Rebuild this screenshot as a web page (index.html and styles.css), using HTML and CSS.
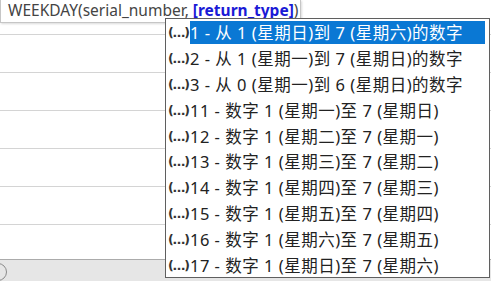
FILE: index.html
```html
<!DOCTYPE html>
<html>
<head>
<meta charset="UTF-8">
<title>WEEKDAY</title>
<link rel="stylesheet" href="styles.css">
</head>
<body>

    <div class="sheet">
        <div class="grid">
            <div class="row first"></div>
            <div class="row"></div>
            <div class="row"></div>
            <div class="row"></div>
            <div class="row"></div>
            <div class="row"></div>
        </div>
        <div class="tabbar">
            <span class="add-sheet"></span>
        </div>

        <!-- 함수 도움말 -->
        <div class="tip">WEEKDAY(serial_number, <b>[return_type]</b>)</div>

        <!-- 자동완성 목록 -->
        <ul class="list">
            <li class="on"><span class="ico">(…)</span><span class="txt">1 - 从 1 (星期日)到 7 (星期六)的数字</span></li>
            <li><span class="ico">(…)</span><span class="txt">2 - 从 1 (星期一)到 7 (星期日)的数字</span></li>
            <li><span class="ico">(…)</span><span class="txt">3 - 从 0 (星期一)到 6 (星期日)的数字</span></li>
            <li><span class="ico">(…)</span><span class="txt">11 - 数字 1 (星期一)至 7 (星期日)</span></li>
            <li><span class="ico">(…)</span><span class="txt">12 - 数字 1 (星期二)至 7 (星期一)</span></li>
            <li><span class="ico">(…)</span><span class="txt">13 - 数字 1 (星期三)至 7 (星期二)</span></li>
            <li><span class="ico">(…)</span><span class="txt">14 - 数字 1 (星期四)至 7 (星期三)</span></li>
            <li><span class="ico">(…)</span><span class="txt">15 - 数字 1 (星期五)至 7 (星期四)</span></li>
            <li><span class="ico">(…)</span><span class="txt">16 - 数字 1 (星期六)至 7 (星期五)</span></li>
            <li><span class="ico">(…)</span><span class="txt">17 - 数字 1 (星期日)至 7 (星期六)</span></li>
        </ul>
    </div>

</body>
</html>
```

FILE: styles.css
```css
*{
    box-sizing: border-box;
}

body{
    margin: 0;
    background-color: #fff;
    font-family: "Noto Sans", "Noto Sans CJK SC", sans-serif;
}

.sheet {
    position: relative;
    width: 491px;
    height: 281px;
    overflow: hidden;
    display: flex;
    flex-direction: column;
}

.grid {
    flex: 1;
}

.grid .row {
    height: 38px;
    border-bottom: 1px solid #d4d4d4;
}

.grid .row.first {
    height: 35px;
}

.tabbar {
    height: 22px;
    background-color: #e6e6e6;
    border-top: 1px solid #ababab;
}

.add-sheet {
    display: block;
    width: 18px;
    height: 18px;
    margin: 3px 0 0 -11px;
    border: 1px solid #8a8a8a;
    border-radius: 50%;
}

.tip {
    position: absolute;
    left: 0;
    top: 0;
    width: 301px;
    height: 23px;
    padding: 0 0 0 7px;
    background-color: #fff;
    border: 1px solid #c6c6c6;
    border-top: none;
    box-shadow: 1px 1px 2px rgba(0,0,0,0.15);
    color: #444;
    font-size: 15.5px;
    line-height: 21px;
    white-space: nowrap;
}

.tip b {
    color: #1a1ad6;
}

.list {
    position: absolute;
    left: 165px;
    top: 18px;
    width: 325px;
    height: 260px;
    margin: 0;
    padding: 1px 0;
    list-style-type: none;
    background-color: #fff;
    border: 1px solid #5f5f5f;
}

.list li {
    display: flex;
    align-items: center;
    height: 25.8px;
    color: #222;
    font-size: 16.5px;
    white-space: nowrap;
}

.list .ico {
    flex-shrink: 0;
    padding-left: 2px;
    font-family: "DejaVu Sans", sans-serif;
    font-size: 12.5px;
    font-weight: bold;
    letter-spacing: -1px;
    color: #333;
}

.list .txt {
    flex: 1;
    height: 23px;
    line-height: 23px;
    margin-left: 1px;
    margin-right: 4px;
    letter-spacing: 0.5px;
}

.list li.on .txt {
    background-color: #0a78d4;
    color: #fff;
}
```
